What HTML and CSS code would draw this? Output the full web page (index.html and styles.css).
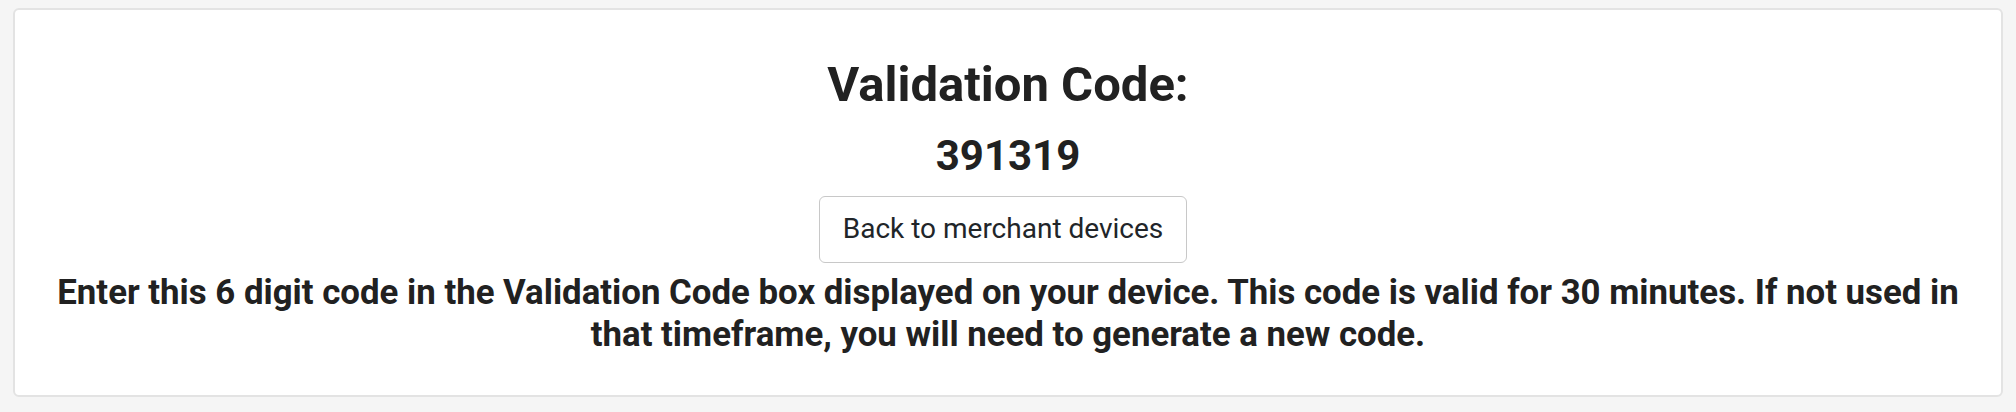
FILE: index.html
```html
<!DOCTYPE html>
<html>
    <head>
        <meta charset="utf-8">
        <title>Validation Code</title>
        <link rel="stylesheet" href="styles.css">
    </head>
    <body>
        <div class="card">
            <h2 class="title">Validation Code:</h2>
            <h3 class="code">391319</h3>
            <a class="btn" href="javascript:;">Back to merchant devices</a>
            <h4 class="note">Enter this 6 digit code in the Validation Code box displayed on your device. This code is valid for 30 minutes. If not used in that timeframe, you will need to generate a new code.</h4>
        </div>
    </body>
</html>
```

FILE: styles.css
```css
*{
    margin: 0;
    padding: 0;
    box-sizing: border-box;
}
body{
    background-color: #f5f5f5;
    font-family: Roboto, "Liberation Sans", sans-serif;
    color: #212121;
    padding: 8px 13px 15px 13px;
}
.card{
    background-color: #fff;
    border: 2px solid #e3e3e3;
    border-radius: 6px;
    height: 389px;
    display: flex;
    flex-direction: column;
    align-items: center;
    text-align: center;
    padding: 47px 20px 0 20px;
}
.title{
    font-size: 49px;
    font-weight: 700;
    line-height: 1.2;
    margin-top: -1px;
}
.code{
    font-size: 42px;
    font-weight: 700;
    line-height: 1.2;
    margin-top: 16px;
}
.btn{
    display: inline-block;
    margin-top: 15px;
    margin-right: 10px;
    padding: 11px 23px 12px 23px;
    font-size: 28px;
    line-height: 1.5;
    color: #212529;
    text-decoration: none;
    border: 1.5px solid #c8c8c8;
    border-radius: 6px;
}
.note{
    font-size: 34.8px;
    font-weight: 700;
    line-height: 1.2;
    margin-top: 9px;
}
```
